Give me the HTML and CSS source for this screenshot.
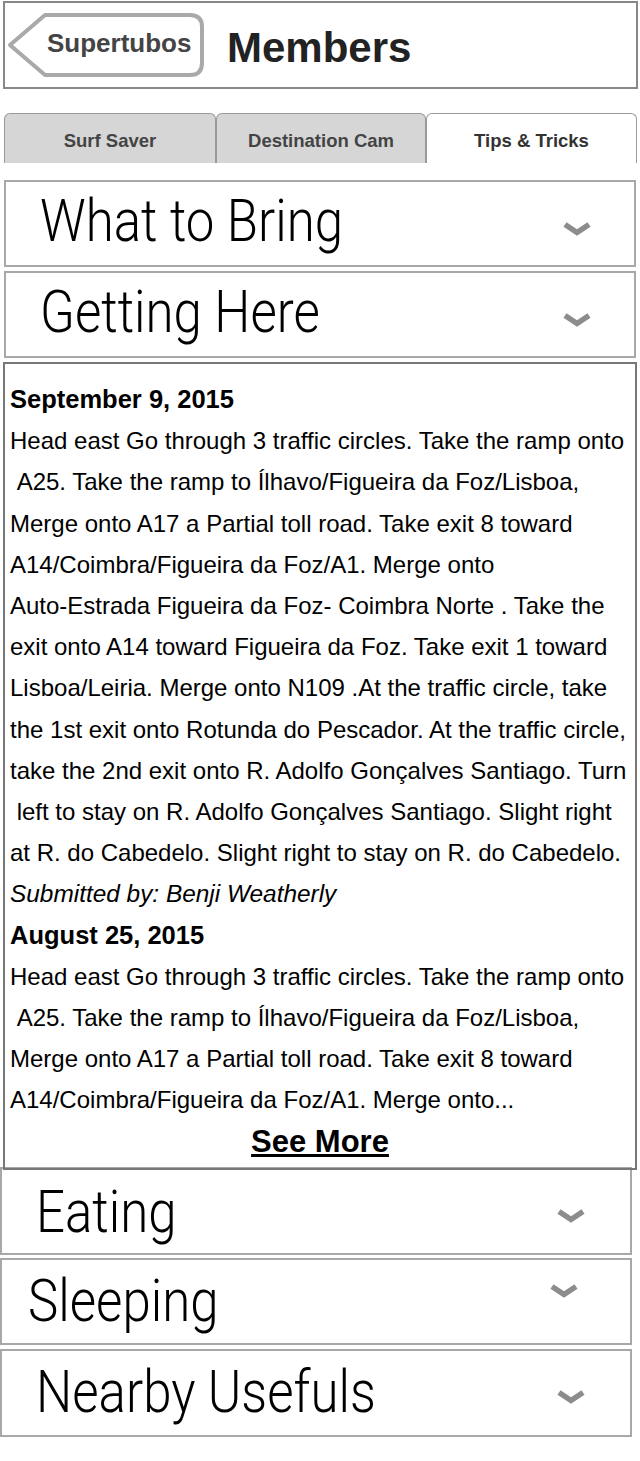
FILE: index.html
```html
<!DOCTYPE html>
<html lang="en">
<head>
<meta charset="utf-8">
<title>Members</title>
<link rel="stylesheet" href="styles.css">
</head>
<body>
<header class="topbar">
  <a class="back" href="#">
    <svg class="back-shape" width="200" height="66" viewBox="0 0 200 66" aria-hidden="true">
      <path d="M38 3 H183 Q195 3 195 15 V51 Q195 63 183 63 H38 L3 33 Z" fill="none" stroke="#a9a9a9" stroke-width="4" stroke-linejoin="round"/>
    </svg>
    <span class="back-label">Supertubos</span>
  </a>
  <h1 class="title">Members</h1>
</header>

<nav class="tabs">
  <div class="tab">Surf Saver</div>
  <div class="tab">Destination Cam</div>
  <div class="tab tab--active">Tips &amp; Tricks</div>
</nav>

<section class="acc acc--top acc--first">
  <span class="acc-title">What to Bring</span>
  <svg class="chev" width="30" height="15" viewBox="0 0 30 15"><polyline points="3,3.5 15,11.5 27,3.5" fill="none" stroke="#8c8c8c" stroke-width="5.5"/></svg>
</section>
<section class="acc acc--top">
  <span class="acc-title">Getting Here</span>
  <svg class="chev" width="30" height="15" viewBox="0 0 30 15"><polyline points="3,3.5 15,11.5 27,3.5" fill="none" stroke="#8c8c8c" stroke-width="5.5"/></svg>
</section>

<div class="panel">
  <p class="entry">
    <b class="date">September 9, 2015</b><br>
    Head east Go through 3 traffic circles. Take the ramp onto<br>
    &nbsp;A25. Take the ramp to Ílhavo/Figueira da Foz/Lisboa,<br>
    Merge onto A17 a Partial toll road. Take exit 8 toward<br>
    A14/Coimbra/Figueira da Foz/A1. Merge onto<br>
    Auto-Estrada Figueira da Foz- Coimbra Norte . Take the<br>
    exit onto A14 toward Figueira da Foz. Take exit 1 toward<br>
    Lisboa/Leiria. Merge onto N109 .At the traffic circle, take<br>
    the 1st exit onto Rotunda do Pescador. At the traffic circle,<br>
    take the 2nd exit onto R. Adolfo Gonçalves Santiago. Turn<br>
    &nbsp;left to stay on R. Adolfo Gonçalves Santiago. Slight right<br>
    at R. do Cabedelo. Slight right to stay on R. do Cabedelo.<br>
    <i class="byline">Submitted by: Benji Weatherly</i><br>
    <b class="date">August 25, 2015</b><br>
    Head east Go through 3 traffic circles. Take the ramp onto<br>
    &nbsp;A25. Take the ramp to Ílhavo/Figueira da Foz/Lisboa,<br>
    Merge onto A17 a Partial toll road. Take exit 8 toward<br>
    A14/Coimbra/Figueira da Foz/A1. Merge onto...
  </p>
  <a class="see-more" href="#">See More</a>
</div>

<section class="acc acc--low acc--eating">
  <span class="acc-title">Eating</span>
  <svg class="chev" width="30" height="15" viewBox="0 0 30 15"><polyline points="3,3.5 15,11.5 27,3.5" fill="none" stroke="#8c8c8c" stroke-width="5.5"/></svg>
</section>
<section class="acc acc--low acc--sleeping">
  <span class="acc-title">Sleeping</span>
  <svg class="chev" width="30" height="15" viewBox="0 0 30 15"><polyline points="3,3.5 15,11.5 27,3.5" fill="none" stroke="#8c8c8c" stroke-width="5.5"/></svg>
</section>
<section class="acc acc--low acc--nearby">
  <span class="acc-title">Nearby Usefuls</span>
  <svg class="chev" width="30" height="15" viewBox="0 0 30 15"><polyline points="3,3.5 15,11.5 27,3.5" fill="none" stroke="#8c8c8c" stroke-width="5.5"/></svg>
</section>
</body>
</html>
```

FILE: styles.css
```css
html, body {
  margin: 0;
  padding: 0;
  background: #ffffff;
}

body {
  width: 640px;
  font-family: "Liberation Sans", Arial, Helvetica, sans-serif;
  color: #000;
}

/* ---------- top bar ---------- */
.topbar {
  box-sizing: border-box;
  width: 635px;
  height: 88px;
  margin: 1px 0 0 3px;
  border: 2px solid #888;
  display: flex;
  align-items: center;
  padding-left: 2px;
}

.back {
  position: relative;
  flex: none;
  width: 200px;
  height: 66px;
  display: flex;
  align-items: center;
  text-decoration: none;
}

.back-shape {
  position: absolute;
  left: 0;
  top: 0;
}

.back-label {
  position: relative;
  padding-left: 40px;
  padding-bottom: 3px;
  font-size: 26px;
  font-weight: bold;
  color: #444;
}

.title {
  margin: 0 0 0 20px;
  padding-top: 6px;
  font-size: 42px;
  font-weight: bold;
  color: #222;
}

/* ---------- tabs ---------- */
.tabs {
  display: grid;
  grid-template-columns: 212px 210px 211px;
  height: 50px;
  margin: 24px 0 0 4px;
}

.tab {
  box-sizing: border-box;
  border: 1px solid #9a9a9a;
  border-bottom: 0;
  border-radius: 6px 6px 0 0;
  background: #d6d6d6;
  display: flex;
  align-items: center;
  justify-content: center;
  padding-top: 5px;
  font-size: 18.5px;
  font-weight: bold;
  color: #444;
}

.tab--active {
  background: #fff;
  color: #333;
}

/* ---------- accordion rows ---------- */
.acc {
  box-sizing: border-box;
  width: 632px;
  height: 87px;
  border: 2px solid #a8a8a8;
  display: flex;
  align-items: center;
}

.acc--top {
  margin: 4px 0 0 4px;
  padding-left: 34px;
}

.acc--first {
  margin-top: 17px;
}

.acc-title {
  display: inline-block;
  white-space: nowrap;
  font-family: Roboto, "Liberation Sans", sans-serif;
  font-weight: 300;
  font-size: 60px;
  line-height: 70px;
  color: #000;
  transform: scaleX(0.85);
  transform-origin: left center;
}

.acc--top .acc-title {
  margin-bottom: 6px;
}

.chev {
  flex: none;
  margin-left: auto;
  margin-right: 42px;
  margin-top: 10px;
}

.acc--low {
  margin: 4px 0 0 0;
  padding-left: 34px;
}

.acc--eating {
  height: 88px;
  margin-top: -3px;
}

.acc--eating .acc-title {
  margin-top: 2px;
}

.acc--eating .chev,
.acc--nearby .chev {
  margin-right: 44px;
}

.acc--sleeping {
  margin-top: 3px;
  padding-left: 26px;
}

.acc--sleeping .chev {
  margin-right: 51px;
  margin-top: 0;
  margin-bottom: 22px;
}

.acc--nearby {
  height: 88px;
}

.acc--nearby .acc-title {
  margin-bottom: 2px;
}

.acc--nearby .chev {
  margin-top: 7px;
}

/* ---------- expanded panel ---------- */
.panel {
  box-sizing: border-box;
  width: 634px;
  margin: 4px 0 0 3px;
  border: 2px solid #777;
  padding: 15px 0 6px 5px;
  position: relative;
  z-index: 1;
}

.entry {
  margin: 0;
  font-size: 24px;
  line-height: 41.2px;
  white-space: nowrap;
}

.date {
  font-size: 25.5px;
}

.byline {
  font-size: 24.4px;
}

.see-more {
  display: block;
  text-align: center;
  margin-right: 5px;
  font-size: 31px;
  font-weight: bold;
  line-height: 41.2px;
  color: #000;
  text-decoration: underline;
}
```
